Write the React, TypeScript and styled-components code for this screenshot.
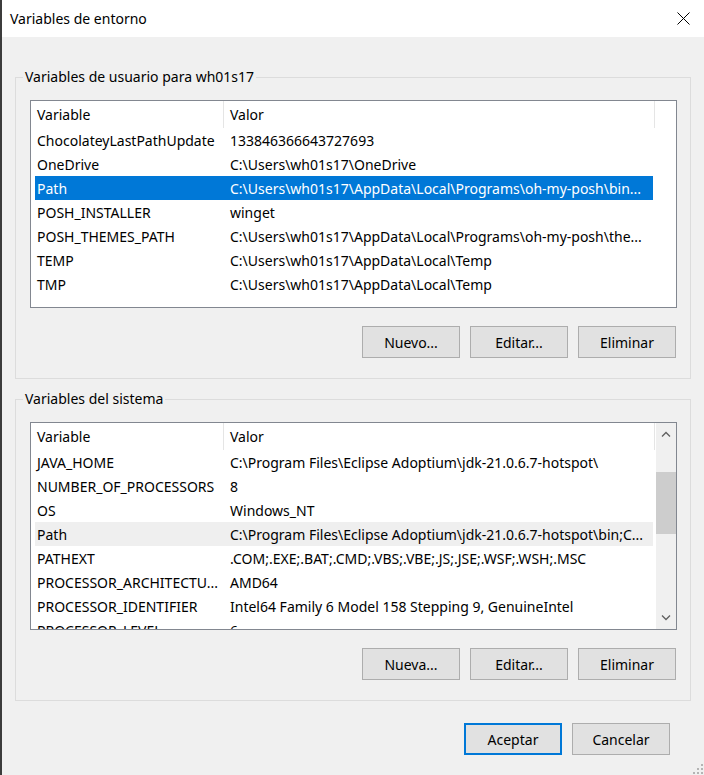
import React from "react";
import styled, { createGlobalStyle } from "styled-components";

const GlobalStyle = createGlobalStyle`
  html, body {
    margin: 0;
    padding: 0;
    background: #f0f0f0;
  }
  body {
    font-family: "Noto Sans", "Open Sans", sans-serif;
  }
`;

const Window = styled.div`
  position: relative;
  width: 704px;
  height: 775px;
  box-sizing: border-box;
  border-left: 2px solid #3c3c3c;
  background: #f0f0f0;
  font-family: "Noto Sans", "Open Sans", sans-serif;
  font-size: 14px;
  color: #000;
  overflow: hidden;
  display: flex;
  flex-direction: column;
`;

const TitleBar = styled.div`
  flex: none;
  height: 37px;
  background: #fff;
  display: flex;
  align-items: center;
  justify-content: space-between;
  padding: 0 14px 0 8px;
`;

const Title = styled.span`
  font-size: 14px;
  line-height: 20px;
`;

const CloseGlyph = styled.svg`
  display: block;
  width: 13px;
  height: 13px;
`;

const Content = styled.div`
  display: flex;
  flex-direction: column;
  padding: 0 13px;
`;

const Group = styled.fieldset<{ $top: number }>`
  margin: ${(p) => p.$top}px 0 0 0;
  padding: 0;
  min-width: 0;
  border: 1px solid #dcdcdc;
`;

const Legend = styled.legend`
  margin-left: 7px;
  padding: 0 2px;
  font-size: 14px;
  line-height: 20px;
`;

const GroupBody = styled.div`
  display: flex;
  flex-direction: column;
  padding: 13px 13px 20px 14px;
`;

const ListView = styled.div`
  height: 208px;
  box-sizing: border-box;
  border: 1px solid #828790;
  background: #fff;
  display: flex;
  overflow: hidden;
`;

const ListMain = styled.div`
  flex: 1;
  min-width: 0;
  display: flex;
  flex-direction: column;
  overflow: hidden;
`;

const Header = styled.div`
  flex: none;
  display: grid;
  grid-template-columns: 193px 431px 1fr;
  height: 27px;
`;

const HeaderCell = styled.div<{ $divider?: boolean }>`
  box-sizing: border-box;
  padding: 1px 0 0 6px;
  line-height: 26px;
  white-space: nowrap;
  border-right: ${(p) => (p.$divider ? "1px solid #e5e5e5" : "none")};
`;

const Row = styled.div<{ $state?: "selected" | "hover" }>`
  flex: none;
  display: grid;
  grid-template-columns: 189px 429px;
  width: 618px;
  margin-left: 4px;
  height: 24px;
  line-height: 26px;
  background: ${(p) =>
    p.$state === "selected" ? "#0078d7" : p.$state === "hover" ? "#efefef" : "transparent"};
  color: ${(p) => (p.$state === "selected" ? "#fff" : "#000")};
`;

const Cell = styled.div<{ $pad: number }>`
  height: 24px;
  padding-left: ${(p) => p.$pad}px;
  white-space: nowrap;
  overflow: hidden;
  text-overflow: ellipsis;
`;

const ScrollBar = styled.div`
  flex: none;
  width: 20px;
  background: #f0f0f0;
  display: flex;
  flex-direction: column;
`;

const ScrollArrow = styled.div`
  flex: none;
  height: 22px;
  display: flex;
  align-items: center;
  justify-content: center;
`;

const ScrollTrack = styled.div`
  flex: 1;
`;

const ScrollThumb = styled.div`
  margin-top: 27px;
  height: 62px;
  background: #cdcdcd;
`;

const ButtonRow = styled.div<{ $top: number; $right: number }>`
  display: flex;
  justify-content: flex-end;
  gap: 10px;
  margin-top: ${(p) => p.$top}px;
  padding-right: ${(p) => p.$right}px;
`;

const Button = styled.button<{ $default?: boolean }>`
  width: 98px;
  height: 32px;
  box-sizing: border-box;
  margin: 0;
  padding: 0;
  font-family: inherit;
  font-size: 14px;
  color: #000;
  background: #e1e1e1;
  border: ${(p) => (p.$default ? "2px solid #0078d7" : "1px solid #adadad")};
  border-radius: 0;
`;

const Grip = styled.svg`
  position: absolute;
  right: 1px;
  bottom: 1px;
  width: 10px;
  height: 10px;
`;

type Item = { name: string; value: string; state?: "selected" | "hover" };

const userVars: Item[] = [
  { name: "ChocolateyLastPathUpdate", value: "133846366643727693" },
  { name: "OneDrive", value: "C:\\Users\\wh01s17\\OneDrive" },
  {
    name: "Path",
    value: "C:\\Users\\wh01s17\\AppData\\Local\\Programs\\oh-my-posh\\bin...",
    state: "selected",
  },
  { name: "POSH_INSTALLER", value: "winget" },
  {
    name: "POSH_THEMES_PATH",
    value: "C:\\Users\\wh01s17\\AppData\\Local\\Programs\\oh-my-posh\\the...",
  },
  { name: "TEMP", value: "C:\\Users\\wh01s17\\AppData\\Local\\Temp" },
  { name: "TMP", value: "C:\\Users\\wh01s17\\AppData\\Local\\Temp" },
];

const systemVars: Item[] = [
  { name: "JAVA_HOME", value: "C:\\Program Files\\Eclipse Adoptium\\jdk-21.0.6.7-hotspot\\" },
  { name: "NUMBER_OF_PROCESSORS", value: "8" },
  { name: "OS", value: "Windows_NT" },
  {
    name: "Path",
    value: "C:\\Program Files\\Eclipse Adoptium\\jdk-21.0.6.7-hotspot\\bin;C...",
    state: "hover",
  },
  { name: "PATHEXT", value: ".COM;.EXE;.BAT;.CMD;.VBS;.VBE;.JS;.JSE;.WSF;.WSH;.MSC" },
  { name: "PROCESSOR_ARCHITECTU...", value: "AMD64" },
  { name: "PROCESSOR_IDENTIFIER", value: "Intel64 Family 6 Model 158 Stepping 9, GenuineIntel" },
  { name: "PROCESSOR_LEVEL", value: "6" },
];

const Chevron = ({ up }: { up: boolean }) => (
  <svg width="10" height="6" viewBox="0 0 10 6">
    <path
      d={up ? "M1 5.5 L5 1.5 L9 5.5" : "M1 0.5 L5 4.5 L9 0.5"}
      fill="none"
      stroke="#606060"
      strokeWidth="1.3"
    />
  </svg>
);

const VariableList = ({ items, scroll }: { items: Item[]; scroll?: boolean }) => (
  <ListView>
    <ListMain>
      <Header>
        <HeaderCell $divider>Variable</HeaderCell>
        <HeaderCell $divider>Valor</HeaderCell>
        <HeaderCell />
      </Header>
      {items.map((it) => (
        <Row key={it.name} $state={it.state}>
          <Cell $pad={2}>{it.name}</Cell>
          <Cell $pad={6}>{it.value}</Cell>
        </Row>
      ))}
    </ListMain>
    {scroll && (
      <ScrollBar>
        <ScrollArrow>
          <Chevron up />
        </ScrollArrow>
        <ScrollTrack>
          <ScrollThumb />
        </ScrollTrack>
        <ScrollArrow>
          <Chevron up={false} />
        </ScrollArrow>
      </ScrollBar>
    )}
  </ListView>
);

export default function App() {
  return (
    <>
      <GlobalStyle />
      <Window>
        <TitleBar>
          <Title>Variables de entorno</Title>
          <CloseGlyph viewBox="0 0 13 13">
            <path d="M0.5 0.5 L12.5 12.5 M12.5 0.5 L0.5 12.5" stroke="#000" strokeWidth="1" />
          </CloseGlyph>
        </TitleBar>
        <Content>
          <Group $top={30}>
            <Legend>Variables de usuario para wh01s17</Legend>
            <GroupBody>
              <VariableList items={userVars} />
              <ButtonRow $top={18} $right={1}>
                <Button>Nuevo...</Button>
                <Button>Editar...</Button>
                <Button>Eliminar</Button>
              </ButtonRow>
            </GroupBody>
          </Group>
          <Group $top={10}>
            <Legend>Variables del sistema</Legend>
            <GroupBody>
              <VariableList items={systemVars} scroll />
              <ButtonRow $top={18} $right={1}>
                <Button>Nueva...</Button>
                <Button>Editar...</Button>
                <Button>Eliminar</Button>
              </ButtonRow>
            </GroupBody>
          </Group>
          <ButtonRow $top={22} $right={21}>
            <Button $default>Aceptar</Button>
            <Button>Cancelar</Button>
          </ButtonRow>
        </Content>
        <Grip viewBox="0 0 10 10">
          <rect x="8" y="0" width="2" height="2" fill="#b4b4b4" />
          <rect x="4" y="4" width="2" height="2" fill="#b4b4b4" />
          <rect x="8" y="4" width="2" height="2" fill="#b4b4b4" />
          <rect x="0" y="8" width="2" height="2" fill="#b4b4b4" />
          <rect x="4" y="8" width="2" height="2" fill="#b4b4b4" />
          <rect x="8" y="8" width="2" height="2" fill="#b4b4b4" />
        </Grip>
      </Window>
    </>
  );
}
